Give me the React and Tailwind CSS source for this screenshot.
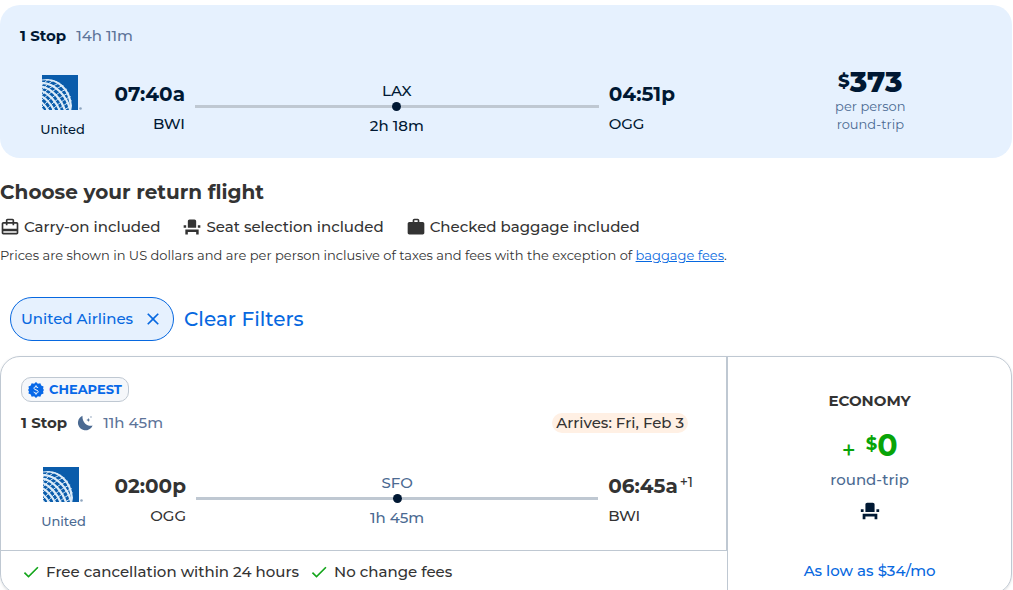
import React from 'react';
import { MdCardTravel, MdEventSeat, MdWork, MdCheck, MdClose } from 'react-icons/md';

const outbound = {
  duration: '14h 11m',
  depart: { time: '07:40a', code: 'BWI' },
  arrive: { time: '04:51p', code: 'OGG' },
  stop: { code: 'LAX', layover: '2h 18m' },
};

const inbound = {
  duration: '11h 45m',
  depart: { time: '02:00p', code: 'OGG' },
  arrive: { time: '06:45a', code: 'BWI', dayOffset: '+1' },
  stop: { code: 'SFO', layover: '1h 45m' },
};

const amenities = [
  { icon: MdCardTravel, label: 'Carry-on included' },
  { icon: MdEventSeat, label: 'Seat selection included' },
  { icon: MdWork, label: 'Checked baggage included' },
];

const perks = ['Free cancellation within 24 hours', 'No change fees'];

function UnitedLogo({ id }) {
  return (
    <svg viewBox="0 0 41 35" className="h-[35px] w-[41px]" role="img" aria-label="United logo">
      <defs>
        <clipPath id={`${id}-box`}>
          <rect width="36" height="35" />
        </clipPath>
        <clipPath id={`${id}-globe`}>
          <circle cx="5" cy="29" r="25" />
        </clipPath>
      </defs>
      <rect width="36" height="35" fill="#0a5cab" />
      <g clipPath={`url(#${id}-box)`}>
        <g clipPath={`url(#${id}-globe)`} fill="none" stroke="#dcebf8">
          {/* lines running from the top left down to the right */}
          <g strokeWidth="2.200">
            <path d="M-4 5C14 1 30 13 29 37" />
            <path d="M-4 8C12 6 28 22 29 42" />
            <path d="M-4 11C10 12 21 25 25 42" />
            <path d="M-4 15C7 17 16 28 20 42" />
            <path d="M-4 20C4 22 11 31 15 42" />
            <path d="M-4 25C1 27 6 34 10 42" />
            <path d="M-4 31C-1 32 2 36 5 42" />
          </g>
          {/* crossing lines */}
          <g strokeWidth="1">
            <path d="M-2 12C1 9 4 6 8 3" />
            <path d="M-2 17C3 11 8 7 14 4" />
            <path d="M-2 22C4 15 11 10 20 7" />
            <path d="M-2 27C6 19 14 13 24 9" />
            <path d="M0 32C8 23 17 17 27 13" />
            <path d="M4 35C11 27 19 21 29 17" />
            <path d="M9 36C16 29 22 24 30 21" />
            <path d="M15 36C20 31 25 28 31 25" />
            <path d="M21 36C25 33 27 32 31 30" />
          </g>
        </g>
      </g>
      <circle cx="38.500" cy="33.500" r="1.300" fill="#8fa6bf" />
    </svg>
  );
}

function NightIcon() {
  return (
    <svg viewBox="0 0 16 16" className="size-4" fill="#4b6a92" aria-label="Overnight flight">
      <path d="M5.500 .8A7.600 7.600 0 1 0 15.600 10.600C10.500 11.800 5 7.500 5.500 .8Z" />
      <path d="m11.300 3 .6 1.400 1.400.6-1.400.6-.6 1.400-.6-1.400L9.300 5l1.400-.6Z" />
      <path d="m14 1 .3.700.7.300-.7.300-.3.700-.3-.7-.7-.3.700-.3Z" />
    </svg>
  );
}

function SealIcon() {
  return (
    <svg viewBox="0 0 24 24" className="size-4" aria-hidden="true">
      <path
        fill="#0768e8"
        d="m12 0 2.800 2.500L18.500 1.800l1.300 3.500 3.500 1.300-.7 3.700L24 12l-1.400 2 .7 3.400-3.500 1.300-1.300 3.500-3.700-.7L12 24l-2.800-2.500-3.700.7-1.300-3.500-3.500-1.300.7-3.400L0 12l1.400-1.700-.7-3.700 3.500-1.300 1.300-3.500 3.700.7Z"
      />
      <path
        fill="none"
        stroke="#fff"
        strokeWidth="1.500"
        d="M15 9c-.4-1.300-1.500-1.800-3-1.800-1.700 0-3 .8-3 2.200 0 3.200 6.200 1.800 6.200 5 0 1.500-1.400 2.400-3.200 2.400-1.700 0-2.900-.7-3.300-2.100M12 5v2.500M12 16.500V19"
      />
    </svg>
  );
}

function FlightRoute({ id, flight, airlineColor, stopColor }) {
  return (
    <div className="flex">
      <div className="flex w-[85px] shrink-0 flex-col items-center pt-px">
        <UnitedLogo id={id} />
        <span className={`mt-[9px] text-[13px] leading-5 ${airlineColor}`}>United</span>
      </div>
      <div className="flex w-20 shrink-0 flex-col items-end pt-1">
        <span className="text-xl leading-8 font-bold">{flight.depart.time}</span>
        <span className="text-[15px] leading-7">{flight.depart.code}</span>
      </div>
      <div className={`mx-2.5 flex flex-1 flex-col items-center pt-[5px] text-[15px] ${stopColor}`}>
        <span className="leading-[23px]">{flight.stop.code}</span>
        <div className="flex h-[9px] w-full items-center">
          <div className="h-[3px] flex-1 bg-[#bfc8d2]" />
          <div className="size-[9px] rounded-full bg-[#001833]" />
          <div className="h-[3px] flex-1 bg-[#bfc8d2]" />
        </div>
        <span className="mt-[3px] leading-6">{flight.stop.layover}</span>
      </div>
      <div className="flex w-25 shrink-0 flex-col items-start pt-1">
        <div className="flex gap-0.5">
          <span className="text-xl leading-8 font-bold">{flight.arrive.time}</span>
          {flight.arrive.dayOffset && <sup className="top-0 text-sm leading-6">{flight.arrive.dayOffset}</sup>}
        </div>
        <span className="text-[15px] leading-7">{flight.arrive.code}</span>
      </div>
    </div>
  );
}

function SelectedFlight() {
  return (
    <section className="grid grid-cols-[18fr_7fr] rounded-[20px] bg-[#e6f1fe] text-[#001833]">
      <div className="px-5 pt-5 pb-[19px]">
        <div className="mb-[27px] flex gap-2.5 text-[15px] leading-[22px]">
          <span className="font-bold">1 Stop</span>
          <span className="text-[#5d7499]">{outbound.duration}</span>
        </div>
        <FlightRoute id="outbound" flight={outbound} airlineColor="text-[#001833]" stopColor="text-[#001833]" />
      </div>
      <div className="flex flex-col items-center pt-[62px] text-[13px] leading-[18px] font-normal text-[#4b6a92]">
        <div className="flex items-start font-extrabold text-[#001833]">
          <span className="pt-0.5 text-lg leading-6">$</span>
          <span className="text-[29px] leading-[30px]">373</span>
        </div>
        <span>per person</span>
        <span>round-trip</span>
      </div>
    </section>
  );
}

function ResultCard() {
  return (
    <article className="mt-[15px] grid grid-cols-[18fr_7fr] overflow-hidden rounded-[20px] border border-[#bfc8d2] shadow-sm">
      <div className="flex flex-col">
        <div className="border-r-2 border-b border-[#bfc8d2] pt-5 pr-[18px] pb-[19px] pl-5">
          <div className="inline-flex h-[25px] items-center gap-[5px] rounded-[10px] border border-[#bfc8d2] bg-[#f5f7fa] px-1.5 text-[13px] font-bold text-[#0768e8]">
            <SealIcon />
            CHEAPEST
          </div>
          <div className="mt-2 mb-[33px] flex items-center gap-2.5 text-[15px] leading-5">
            <span className="font-bold">1 Stop</span>
            <NightIcon />
            <span className="text-[#5d7499]">{inbound.duration}</span>
            <span className="mr-5 ml-auto rounded-full bg-[#fff0e4] px-1">Arrives: Fri, Feb 3</span>
          </div>
          <FlightRoute id="inbound" flight={inbound} airlineColor="text-[#4b6a92]" stopColor="text-[#4b6a92]" />
        </div>
        <ul className="flex flex-1 gap-2.5 border-r border-[#bfc8d2] px-5 pt-[9px] pb-[9px] text-[15px] leading-6">
          {perks.map((perk) => (
            <li key={perk} className="flex items-center gap-[5px]">
              <MdCheck size={20} className="text-[#12a51a]" />
              {perk}
            </li>
          ))}
        </ul>
      </div>

      <div className="flex flex-col items-center pt-8 text-[15px] leading-6">
        <h3 className="font-bold">ECONOMY</h3>
        <div className="mt-[15px] flex items-start font-bold text-[#08a408]">
          <span className="mr-2.5 pt-[11px] text-2xl leading-6 font-medium">+</span>
          <span className="pt-1 text-lg leading-6">$</span>
          <span className="text-3xl leading-9">0</span>
        </div>
        <span className="mt-1 text-[#4b6a92]">round-trip</span>
        <MdEventSeat size={22} className="mt-2 text-[#001833]" />
        <a href="#financing" className="mt-[37px] text-[#0768e0]">As low as $34/mo</a>
      </div>
    </article>
  );
}

export default function App() {
  return (
    <main className="pt-[5px] pr-px font-[Montserrat,Inter,sans-serif] font-medium text-[#333]">
      <SelectedFlight />

      <h2 className="mt-5 text-xl leading-7 font-bold">Choose your return flight</h2>
      <ul className="mt-[9px] flex gap-[22px] text-[15px] leading-6">
        {amenities.map(({ icon: Icon, label }) => (
          <li key={label} className="flex items-center gap-1">
            <Icon size={20} />
            {label}
          </li>
        ))}
      </ul>
      <p className="mt-[6px] text-[13px] leading-5 font-normal">
        Prices are shown in US dollars and are per person inclusive of taxes and fees with the exception of{' '}
        <a href="#baggage" className="text-[#0768e0] underline">baggage fees</a>.
      </p>

      <div className="mt-8 ml-2.5 flex items-center gap-2.5 text-[#0768e0]">
        <button type="button" className="flex h-11 items-center gap-2.5 rounded-full border border-[#0768e0] bg-[#e6f1fe] px-2.5 text-[15px]">
          United Airlines
          <MdClose size={20} />
        </button>
        <button type="button" className="text-xl">Clear Filters</button>
      </div>

      <ResultCard />
    </main>
  );
}
